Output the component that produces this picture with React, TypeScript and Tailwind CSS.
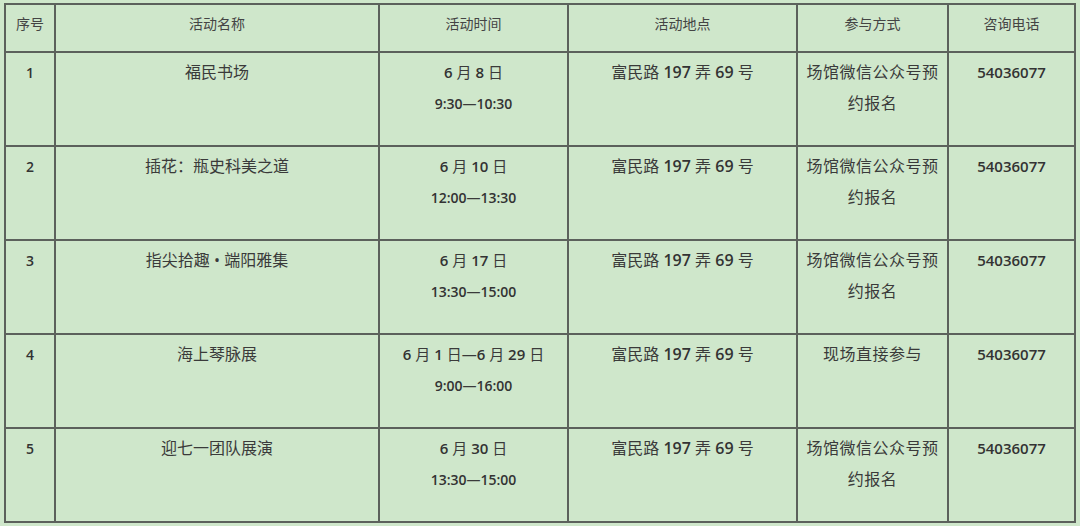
import React from 'react'

const rows = [
  { no: '1', name: '福民书场', date: '6 月 8 日', time: '9:30—10:30', place: '富民路 197 弄 69 号', way: ['场馆微信公众号预', '约报名'], tel: '54036077' },
  { no: '2', name: '插花：瓶史科美之道', date: '6 月 10 日', time: '12:00—13:30', place: '富民路 197 弄 69 号', way: ['场馆微信公众号预', '约报名'], tel: '54036077' },
  { no: '3', name: '指尖拾趣 • 端阳雅集', date: '6 月 17 日', time: '13:30—15:00', place: '富民路 197 弄 69 号', way: ['场馆微信公众号预', '约报名'], tel: '54036077' },
  { no: '4', name: '海上琴脉展', date: '6 月 1 日—6 月 29 日', time: '9:00—16:00', place: '富民路 197 弄 69 号', way: ['现场直接参与'], tel: '54036077' },
  { no: '5', name: '迎七一团队展演', date: '6 月 30 日', time: '13:30—15:00', place: '富民路 197 弄 69 号', way: ['场馆微信公众号预', '约报名'], tel: '54036077' },
]

const headers = ['序号', '活动名称', '活动时间', '活动地点', '参与方式', '咨询电话']

// digits in the source doc come out semibold, CJK stays regular
function Mixed({ text }: { text: string }) {
  const parts = text.split(/([0-9:]+)/)
  return (
    <>
      {parts.map((p, i) =>
        /^[0-9:]+$/.test(p) ? (
          <span key={i} className="font-semibold text-[#333]">{p}</span>
        ) : (
          <span key={i}>{p}</span>
        )
      )}
    </>
  )
}

const border = 'border-2 border-[#5c615c] text-center px-2'
const cell = `${border} align-top pt-[4px] leading-[31px]`

export default function App() {
  return (
    <div
      className="w-[1080px] h-[526px] bg-[#cfe7cb] pt-[3px] pl-[4px] text-[#3a3a3a]"
      style={{ fontFamily: '"Open Sans", "Noto Sans CJK SC", sans-serif' }}
    >
      <table className="border-collapse table-fixed w-[1072px]">
        <colgroup>
          <col className="w-[50px]" />
          <col className="w-[324px]" />
          <col className="w-[189px]" />
          <col className="w-[229px]" />
          <col className="w-[151px]" />
          <col className="w-[127px]" />
        </colgroup>
        <thead>
          <tr className="h-[48px]">
            {headers.map((h) => (
              <th key={h} className={`${border} align-middle font-normal text-[14px] text-[#444] pb-[10px]`}>
                {h}
              </th>
            ))}
          </tr>
        </thead>
        <tbody>
          {rows.map((r) => (
            <tr key={r.no} className="h-[94px]">
              <td className={`${cell} text-[14px]`}>
                <Mixed text={r.no} />
              </td>
              <td className={`${cell} text-[16px]`}>{r.name}</td>
              <td className={`${cell} text-[15px]`}>
                <div><Mixed text={r.date} /></div>
                <div className="text-[14px]"><Mixed text={r.time} /></div>
              </td>
              <td className={`${cell} text-[16px]`}>
                <Mixed text={r.place} />
              </td>
              <td className={`${cell} text-[16px] tracking-[0.5px]`}>
                {r.way.map((w) => (
                  <div key={w}>{w}</div>
                ))}
              </td>
              <td className={`${cell} text-[15px]`}>
                <Mixed text={r.tel} />
              </td>
            </tr>
          ))}
        </tbody>
      </table>
    </div>
  )
}
